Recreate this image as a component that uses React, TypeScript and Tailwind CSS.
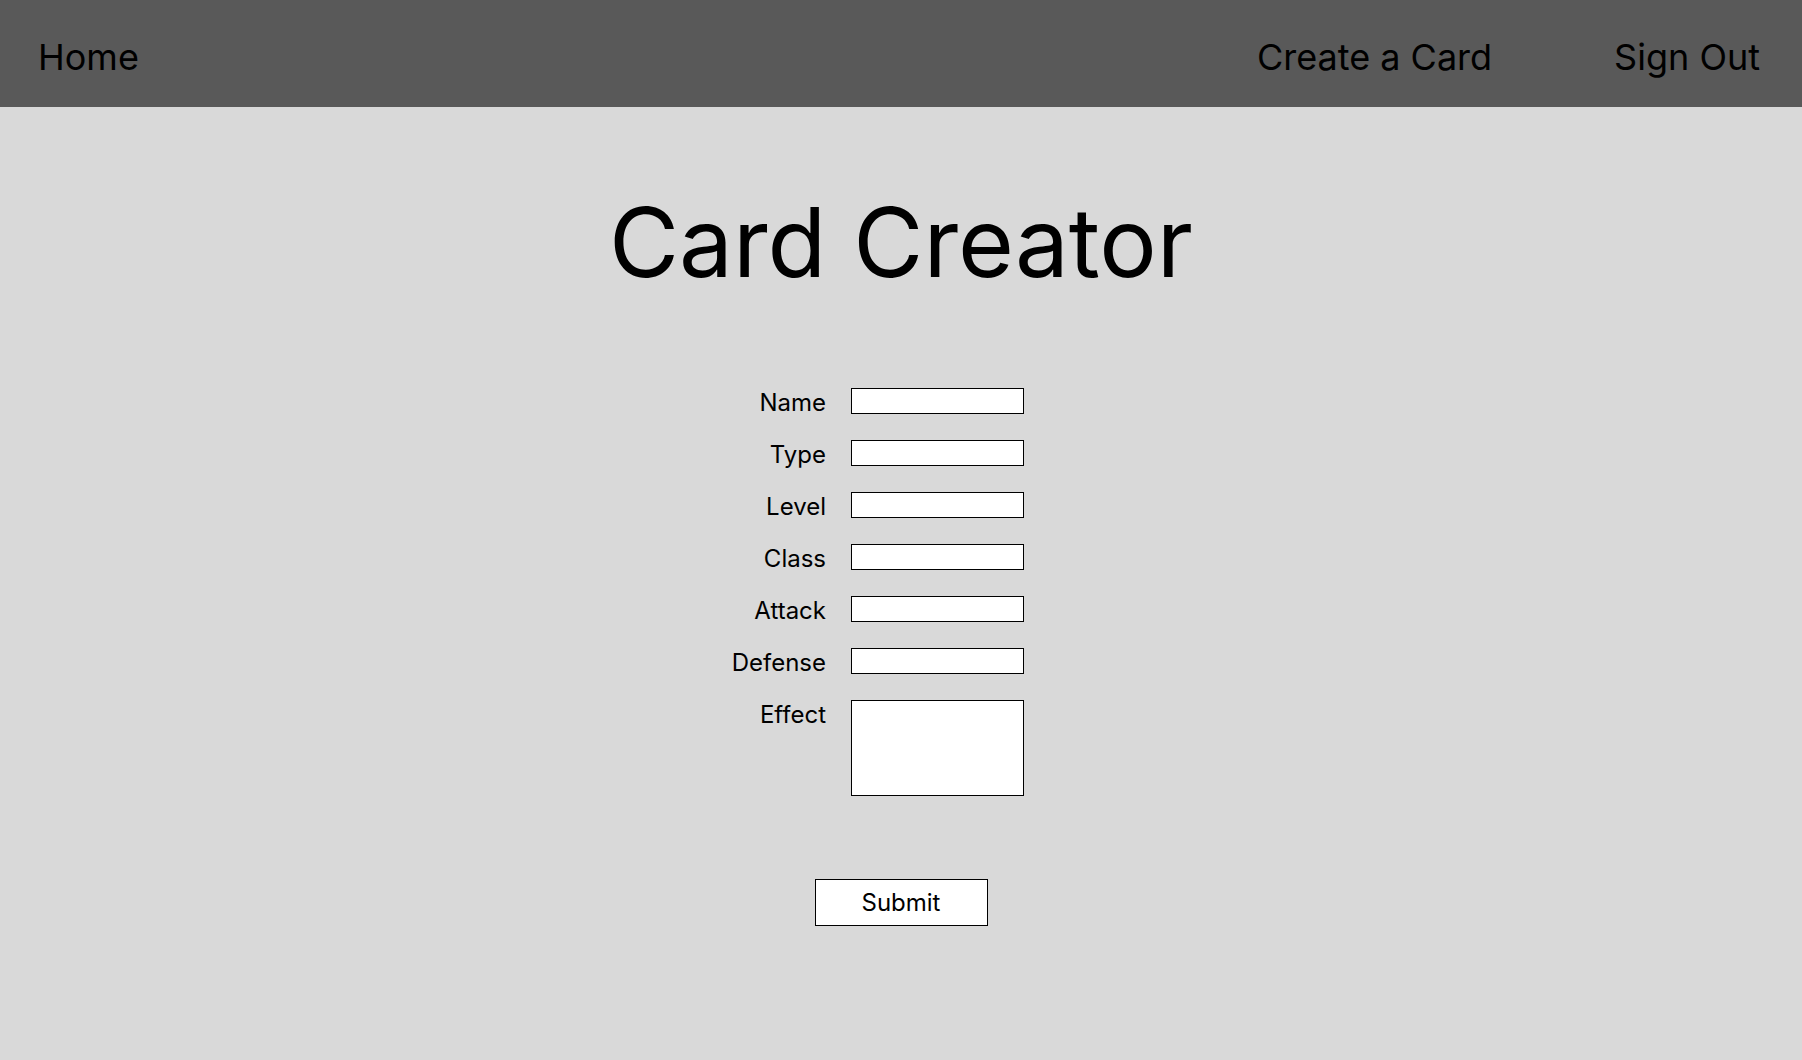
import React from "react";

const fields = ["Name", "Type", "Level", "Class", "Attack", "Defense"];

export default function App() {
  return (
    <div className="min-h-[1060px] w-full bg-[#d9d9d9] text-black" style={{ fontFamily: "Inter, 'Noto Sans', sans-serif" }}>
      <header className="flex h-[107px] items-center justify-between bg-[#595959] pl-[38px] pr-[42px] pt-[8px] text-[36px] leading-[1.21]">
        <a className="text-black">Home</a>
        <nav className="flex items-center gap-[122px]">
          <a className="text-black">Create a Card</a>
          <a className="text-black">Sign Out</a>
        </nav>
      </header>
      <main className="flex flex-col items-center">
        <h1 className="mt-[77px] text-[96px] leading-[1.21] font-normal">Card Creator</h1>
        <form className="mt-[88px] grid w-full grid-cols-[826px_173px] gap-x-[25px] gap-y-[23px] text-[24px] leading-[1.21]">
          {fields.map((f) => (
            <React.Fragment key={f}>
              <label className="text-right">{f}</label>
              <input className="h-[26px] w-[173px] border border-black bg-white outline-none" />
            </React.Fragment>
          ))}
          <label className="text-right">Effect</label>
          <textarea className="h-[96px] w-[173px] resize-none border border-black bg-white outline-none" />
        </form>
        <button className="mt-[83px] h-[47px] w-[173px] border border-black bg-white text-[24px] leading-[1.21]">
          Submit
        </button>
      </main>
    </div>
  );
}
